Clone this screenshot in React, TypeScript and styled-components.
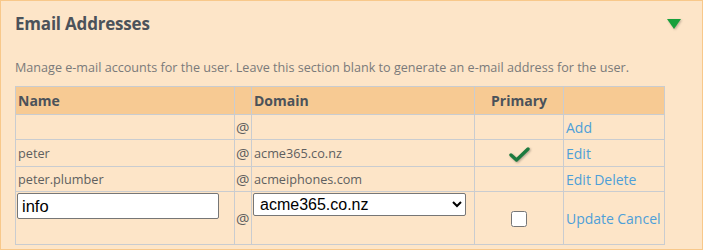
import React from "react";
import styled, { createGlobalStyle } from "styled-components";

const GlobalStyle = createGlobalStyle`
  html, body {
    margin: 0;
    padding: 0;
    background: #ffffff;
  }
  body {
    font-family: "Open Sans", "Noto Sans", sans-serif;
  }
`;

const Panel = styled.section`
  width: 703px;
  height: 250px;
  box-sizing: border-box;
  border: 1px solid #f8c88a;
  background-color: #fde5c8;
  overflow: hidden;
`;

const PanelHeader = styled.header`
  display: flex;
  align-items: center;
  justify-content: space-between;
  height: 45px;
  padding: 0 21px 0 14px;
`;

const Title = styled.h2`
  margin: 0;
  font-size: 17px;
  font-weight: 700;
  color: #4b525a;
  letter-spacing: -0.2px;
`;

const Toggle = styled.svg`
  width: 14px;
  height: 12px;
  filter: drop-shadow(1px 1px 1px rgba(0, 0, 0, 0.25));
`;

const PanelBody = styled.div`
  padding: 13px 14px 0 14px;
`;

const Description = styled.p`
  margin: 0 0 10px 0;
  font-size: 12.6px;
  color: #7a7a7a;
`;

const Table = styled.table`
  width: 649px;
  table-layout: fixed;
  border-collapse: collapse;
  font-size: 12.7px;
  color: #5f5f5f;
`;

const HeadCell = styled.th<{ $align?: string }>`
  height: 27px;
  padding: 0 2px;
  background-color: #f7ca93;
  border: 1px solid #c9ccd0;
  font-size: 14px;
  font-weight: 700;
  color: #4b525a;
  text-align: ${({ $align }) => $align || "left"};
`;

const Row = styled.tr<{ $height: number }>`
  height: ${({ $height }) => $height}px;
`;

const Cell = styled.td<{ $align?: string; $valign?: string }>`
  padding: 0 2px;
  border: 1px solid #c9ccd0;
  text-align: ${({ $align }) => $align || "left"};
  vertical-align: ${({ $valign }) => $valign || "middle"};
  white-space: nowrap;
  overflow: hidden;
`;

const AtCell = styled(Cell)`
  padding: 0 0 0 1px;
  font-size: 15px;
`;

const EditCell = styled(Cell)`
  padding: 1px 1px 0 1px;
`;

const Link = styled.a`
  color: #4e9fd8;
  text-decoration: none;
  font-size: 14px;
  cursor: pointer;
`;

const TextInput = styled.input`
  box-sizing: border-box;
  width: 202px;
  height: 26px;
  margin: 0;
  padding: 0 4px;
  border: 1px solid #767676;
  border-radius: 2px;
  background: #ffffff;
  font-family: "Liberation Sans", Arial, sans-serif;
  font-size: 16.5px;
  color: #000000;
`;

const Select = styled.select`
  box-sizing: border-box;
  width: 213px;
  height: 23px;
  margin: 0;
  padding: 0 0 0 2px;
  border: 1px solid #767676;
  border-radius: 2px;
  background: #ffffff;
  font-family: "Liberation Sans", Arial, sans-serif;
  font-size: 16px;
  color: #000000;
`;

const Checkbox = styled.input`
  width: 16px;
  height: 16px;
  margin: 0;
  vertical-align: middle;
`;

const CheckMark = styled.svg`
  display: block;
  margin: 2px auto 0 auto;
  width: 21px;
  height: 17px;
  filter: drop-shadow(1px 1px 1px rgba(0, 0, 0, 0.3));
`;

const At = () => <AtCell>@</AtCell>;

export default function App() {
  return (
    <>
      <GlobalStyle />
      <Panel>
        <PanelHeader>
          <Title>Email Addresses</Title>
          <Toggle viewBox="0 0 14 12">
            <polygon points="0,1 14,1 7,11" fill="#17a03c" />
          </Toggle>
        </PanelHeader>
        <PanelBody>
          <Description>
            Manage e-mail accounts for the user. Leave this section blank to generate an e-mail address for the user.
          </Description>
          <Table>
            <colgroup>
              <col style={{ width: 219 }} />
              <col style={{ width: 17 }} />
              <col style={{ width: 223 }} />
              <col style={{ width: 89 }} />
              <col style={{ width: 101 }} />
            </colgroup>
            <thead>
              <tr>
                <HeadCell>Name</HeadCell>
                <HeadCell />
                <HeadCell>Domain</HeadCell>
                <HeadCell $align="center">Primary</HeadCell>
                <HeadCell />
              </tr>
            </thead>
            <tbody>
              <Row $height={25}>
                <Cell />
                <At />
                <Cell />
                <Cell />
                <Cell>
                  <Link>Add</Link>
                </Cell>
              </Row>
              <Row $height={27}>
                <Cell>peter</Cell>
                <At />
                <Cell>acme365.co.nz</Cell>
                <Cell $align="center">
                  <CheckMark viewBox="0 0 21 17">
                    <polyline
                      points="2,9 7.5,14 19,3"
                      fill="none"
                      stroke="#1d7a3e"
                      strokeWidth="3.4"
                      strokeLinecap="round"
                      strokeLinejoin="round"
                    />
                  </CheckMark>
                </Cell>
                <Cell>
                  <Link>Edit</Link>
                </Cell>
              </Row>
              <Row $height={25}>
                <Cell>peter.plumber</Cell>
                <At />
                <Cell>acmeiphones.com</Cell>
                <Cell />
                <Cell>
                  <Link>Edit</Link> <Link>Delete</Link>
                </Cell>
              </Row>
              <Row $height={53}>
                <EditCell $valign="top">
                  <TextInput defaultValue="info" />
                </EditCell>
                <At />
                <EditCell $valign="top">
                  <Select defaultValue="acme365.co.nz">
                    <option>acme365.co.nz</option>
                    <option>acmeiphones.com</option>
                  </Select>
                </EditCell>
                <Cell $align="center">
                  <Checkbox type="checkbox" />
                </Cell>
                <Cell>
                  <Link>Update</Link> <Link>Cancel</Link>
                </Cell>
              </Row>
            </tbody>
          </Table>
        </PanelBody>
      </Panel>
    </>
  );
}
